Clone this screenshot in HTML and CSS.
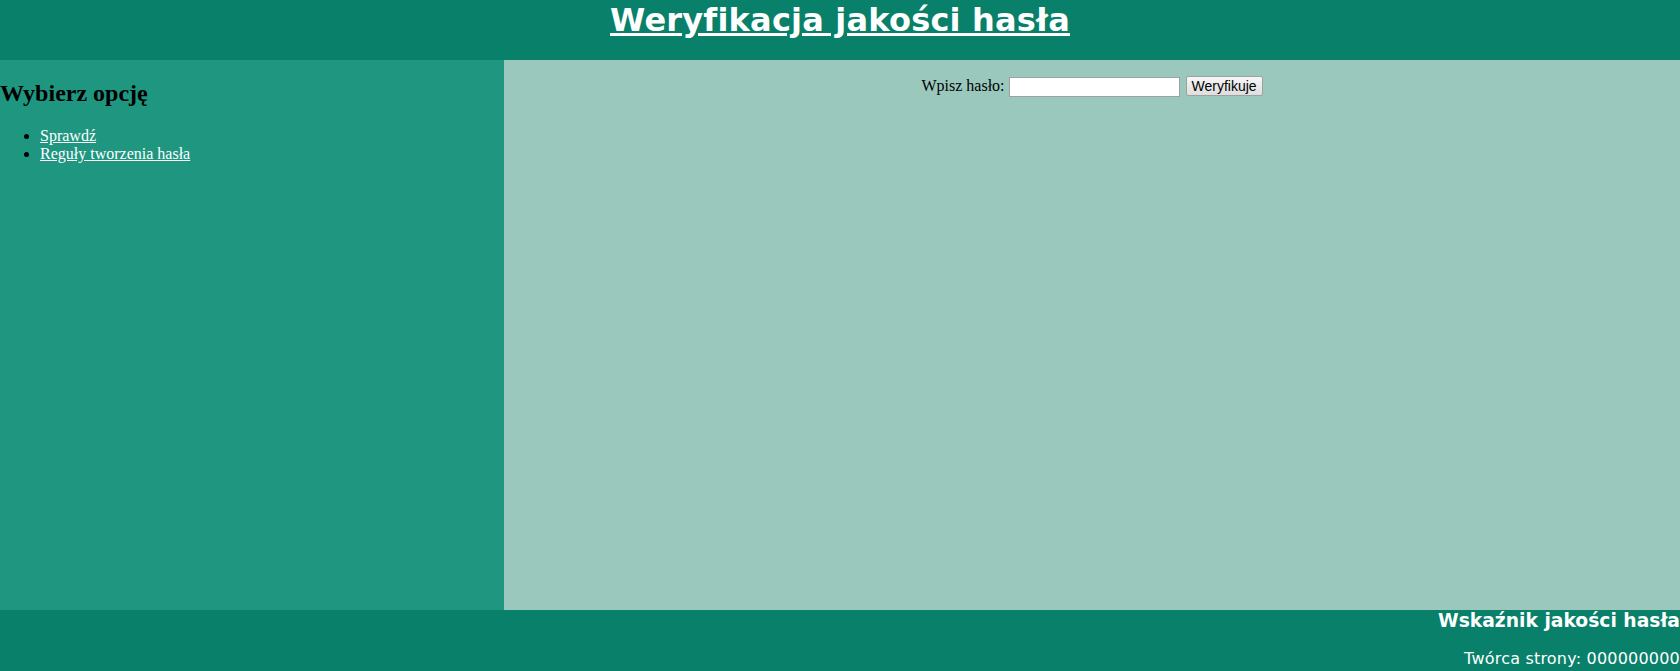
FILE: index.html
```html
<!DOCTYPE html>
<html lang="pl">
<head>
<meta charset="utf-8">
<title>Weryfikacja jakości hasła</title>
<link rel="stylesheet" href="styles.css">
</head>
<body>
<header class="banner">
  <h1 class="banner-title">Weryfikacja jakości hasła</h1>
</header>
<div class="layout">
  <nav class="sidebar">
    <h2 class="sidebar-title">Wybierz opcję</h2>
    <ul class="menu">
      <li><a href="#" class="menu-link">Sprawdź</a></li>
      <li><a href="#" class="menu-link">Reguły tworzenia hasła</a></li>
    </ul>
  </nav>
  <main class="content">
    <form class="check-form">
      <label class="check-label">Wpisz hasło: <input type="password" class="check-input"></label>
      <button type="button" class="check-button">Weryfikuje</button>
    </form>
  </main>
</div>
<footer class="footer">
  <h3 class="footer-title">Wskaźnik jakości hasła</h3>
  <p class="footer-author">Twórca strony: 000000000</p>
</footer>
</body>
</html>
```
FILE: styles.css
```css
html, body {
  margin: 0;
  padding: 0;
}
body {
  width: 1680px;
  height: 671px;
  overflow: hidden;
  display: flex;
  flex-direction: column;
  font-family: "Liberation Serif", "Times New Roman", serif;
}
.banner {
  height: 60px;
  background: #08806a;
  text-align: center;
  flex: none;
}
.banner-title {
  margin: 0;
  padding: 1px 0 0;
  font-family: "DejaVu Sans", Verdana, sans-serif;
  font-size: 32px;
  font-weight: bold;
  letter-spacing: 0.2px;
  color: #ffffff;
  text-decoration: underline;
  text-decoration-thickness: 3px;
  text-underline-offset: 2px;
}
.layout {
  display: flex;
  height: 550px;
  flex: none;
}
.sidebar {
  width: 504px;
  background: #1f9680;
  flex: none;
  overflow: hidden;
}
.sidebar-title {
  margin: 20px 0;
  font-size: 24px;
  font-weight: bold;
  color: #000;
}
.menu {
  margin: 0;
  padding-left: 40px;
  font-size: 16px;
}
.menu-link {
  color: #ffffff;
}
.content {
  flex: 1;
  background: #9ac8bd;
  text-align: center;
  padding-top: 16px;
}
.check-form {
  margin: 0;
  font-size: 16px;
}
.check-label {
  color: #000;
}
.check-input {
  width: 171px;
  height: 20px;
  box-sizing: border-box;
  border: 1px solid #a0a0a0;
  background: #fff;
  vertical-align: baseline;
  margin: 0 2px 0 0;
  padding: 1px 2px;
}
.check-button {
  font-family: "Liberation Sans", Arial, sans-serif;
  font-size: 14px;
  height: 20px;
  width: 77px;
  padding: 0 4px;
  border: 1px solid #a0a0a0;
  border-radius: 2px;
  background: linear-gradient(#f6f6f6, #dedede);
  color: #000;
}
.footer {
  height: 61px;
  background: #08806a;
  text-align: right;
  flex: none;
  overflow: hidden;
  font-family: "DejaVu Sans", Verdana, sans-serif;
  color: #ffffff;
}
.footer-title {
  margin: 0 0 18px;
  font-size: 18.72px;
  font-weight: bold;
}
.footer-author {
  margin: 0;
  font-size: 16px;
  letter-spacing: 0.2px;
}
```
